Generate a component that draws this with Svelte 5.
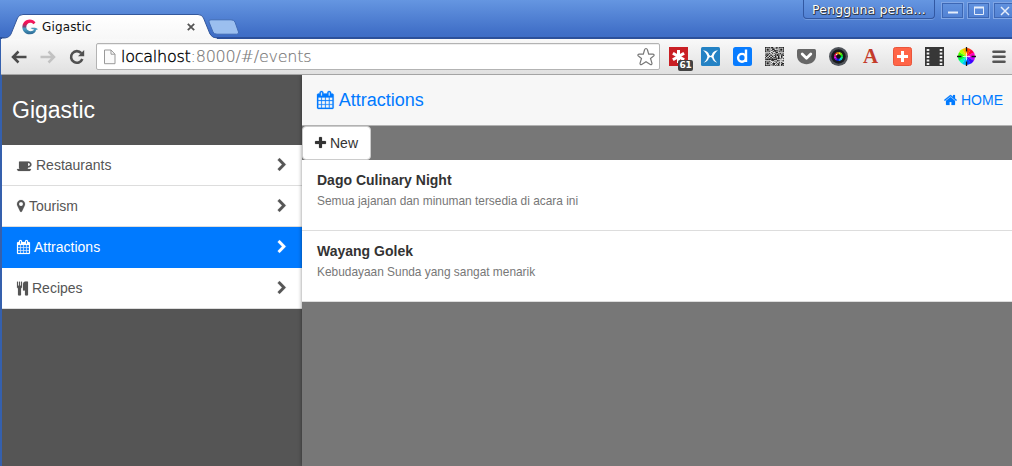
<script>
  const icons = {
    coffee: { x: 0, w: 1920, d: 'M1664 832q0-80-56-136t-136-56h-64v384h64q80 0 136-56t56-136zm-1664 576h1792q0 106-75 181t-181 75h-1280q-106 0-181-75t-75-181zm1856-576q0 159-112.500 271.500t-271.500 112.500h-64v32q0 92-66 158t-158 66h-704q-92 0-158-66t-66-158v-736q0-26 19-45t45-19h1152q159 0 271.500 112.500t112.500 271.500z' },
    marker: { x: 384, w: 1024, d: 'M1152 640q0-106-75-181t-181-75-181 75-75 181 75 181 181 75 181-75 75-181zm256 0q0 109-33 179l-364 774q-16 33-47.500 52t-67.500 19-67.500-19-46.500-52l-365-774q-33-70-33-179 0-212 150-362t362-150 362 150 150 362z' },
    calendar: { x: 64, w: 1664, d: 'M192 1664h288v-288h-288v288zm352 0h320v-288h-320v288zm-352-352h288v-320h-288v320zm352 0h320v-320h-320v320zm-352-384h288v-288h-288v288zm736 736h320v-288h-320v288zm-384-736h320v-288h-320v288zm768 736h288v-288h-288v288zm-384-352h320v-320h-320v320zm-352-864v-288q0-13-9.500-22.500t-22.500-9.500h-64q-13 0-22.500 9.500t-9.500 22.500v288q0 13 9.500 22.500t22.500 9.500h64q13 0 22.500-9.500t9.500-22.500zm736 864h288v-320h-288v320zm-384-384h320v-288h-320v288zm384 0h288v-288h-288v288zm32-480v-288q0-13-9.500-22.500t-22.500-9.500h-64q-13 0-22.500 9.500t-9.500 22.500v288q0 13 9.500 22.500t22.500 9.500h64q13 0 22.500-9.500t9.500-22.500zm384-64v1280q0 52-38 90t-90 38h-1408q-52 0-90-38t-38-90v-1280q0-52 38-90t90-38h128v-96q0-66 47-113t113-47h64q66 0 113 47t47 113v96h384v-96q0-66 47-113t113-47h64q66 0 113 47t47 113v96h128q52 0 90 38t38 90z' },
    cutlery: { x: 192, w: 1408, d: 'M832 128v640q0 61-35.500 111t-92.500 70v779q0 52-38 90t-90 38h-128q-52 0-90-38t-38-90v-779q-57-20-92.500-70t-35.500-111v-640q0-26 19-45t45-19 45 19 19 45v416q0 26 19 45t45 19 45-19 19-45v-416q0-26 19-45t45-19 45 19 19 45v416q0 26 19 45t45 19 45-19 19-45v-416q0-26 19-45t45-19 45 19 19 45zm768 0v1600q0 52-38 90t-90 38h-128q-52 0-90-38t-38-90v-512h-224q-13 0-22.500-9.500t-9.500-22.500v-800q0-132 94-226t226-94h256q26 0 45 19t19 45z' },
    chevron: { x: 256, w: 1280, d: 'M1363 877l-742 742q-19 19-45 19t-45-19l-166-166q-19-19-19-45t19-45l531-531-531-531q-19-19-19-45t19-45l166-166q19-19 45-19t45 19l742 742q19 19 19 45t-19 45z' },
    plus: { x: 192, w: 1408, d: 'M1600 736v192q0 40-28 68t-68 28h-416v416q0 40-28 68t-68 28h-192q-40 0-68-28t-28-68v-416h-416q-40 0-68-28t-28-68v-192q0-40 28-68t68-28h416v-416q0-40 28-68t68-28h192q40 0 68 28t28 68v416h416q40 0 68 28t28 68z' },
    home: { x: 64, w: 1664, d: 'M1472 992v480q0 26-19 45t-45 19h-384v-384h-256v384h-384q-26 0-45-19t-19-45v-480q0-1 .5-3t.5-3l575-474 575 474q1 2 1 6zm223-69l-62 74q-8 9-21 11h-3q-13 0-21-7l-692-577-692 577q-12 8-24 7-13-2-21-11l-62-74q-8-10-7-23.500t11-21.500l719-599q32-26 76-26t76 26l244 204v-195q0-14 9-23t23-9h192q14 0 23 9t9 23v408l219 182q10 8 11 21.500t-7 23.500z' }
  };

  const menu = [
    { icon: 'coffee', label: 'Restaurants' },
    { icon: 'marker', label: 'Tourism' },
    { icon: 'calendar', label: 'Attractions', active: true },
    { icon: 'cutlery', label: 'Recipes' }
  ];

  const events = [
    { title: 'Dago Culinary Night', text: 'Semua jajanan dan minuman tersedia di acara ini' },
    { title: 'Wayang Golek', text: 'Kebudayaan Sunda yang sangat menarik' }
  ];

  // 25x25 module grid for the QR extension icon
  const finder = (x, y) => {
    if (x > 7 || y > 7 || x < -1 || y < -1) return null;
    if (x === 7 || y === 7 || x === -1 || y === -1) return false;
    return x === 0 || y === 0 || x === 6 || y === 6 || (x > 1 && x < 5 && y > 1 && y < 5);
  };
  let qr = '';
  for (let y = 0; y < 25; y++)
    for (let x = 0; x < 25; x++) {
      const f = finder(x, y) ?? finder(x - 18, y) ?? finder(x, y - 18);
      const on = f ?? ((x * x * 7 + y * 13 + x * y * 3 + (x ^ (y * 5))) % 7 < 4);
      if (on) qr += `M${x} ${y}h1v1h-1z`;
    }

  const wheel = Array.from({ length: 12 }, (_, i) => {
    const a = (i * 30 - 90) * Math.PI / 180, b = (i * 30 - 59) * Math.PI / 180;
    return {
      d: `M0 0L${8.5 * Math.cos(a)} ${8.5 * Math.sin(a)}A8.5 8.5 0 0 1 ${8.5 * Math.cos(b)} ${8.5 * Math.sin(b)}Z`,
      c: `hsl(${(375 - i * 30) % 360} 100% 50%)`,
      k: `hsl(${(i * 30 + 60) % 360} 90% 50%)`
    };
  });
</script>

{#snippet fa(name, size)}
  {@const i = icons[name]}
  <svg class="fa" width={size * i.w / 1792} height={size} viewBox="{i.x} 0 {i.w} 1792"><path d={i.d} /></svg>
{/snippet}

<div class="window">
  <header class="titlebar">
    <div class="tab">
      <svg class="tabshape" width="216" height="25" viewBox="0 0 216 25">
        <defs><linearGradient id="tg" x2="0" y2="1"><stop offset="0" stop-color="#fff" /><stop offset="1" stop-color="#f7f7f7" /></linearGradient></defs>
        <path d="M0 25V24Q7 24.500 9 20L15.500 4Q17 .5 21 .5H196Q200 .5 201.500 4L208 20Q210 24 215 24V25Z" fill="url(#tg)" />
        <path d="M0 24Q7 24.500 9 20L15.500 4Q17 .5 21 .5H196Q200 .5 201.500 4L208 20Q210 24 215 24" fill="none" stroke="#34589c" stroke-width="1" />
      </svg>
      <svg class="favicon" width="16" height="16" viewBox="0 0 16 16">
        <defs><linearGradient id="fg" x2="0" y2="1"><stop offset="0" stop-color="#ff1763" /><stop offset=".3" stop-color="#e51454" /><stop offset=".48" stop-color="#754a7c" /><stop offset=".62" stop-color="#4aa0c4" /><stop offset="1" stop-color="#2d6692" /></linearGradient></defs>
        <path d="M13.500 3.500C11-.6 4.500-.5 1.600 3.700-1.500 8.300 1.200 15.500 8 15.300c3.600 0 5.700-2 6-4.300l2-.7c-2.200-2-4.500-1.800-7.500-1.200 1 .8 2 1.200 3.600 1.500C10.500 13 5.200 12.700 4.400 9 3.600 5 8 1.700 11.500 5.300Z" fill="url(#fg)" />
      </svg>
      <span class="tabtitle">Gigastic</span>
      <svg class="close" width="8" height="8" viewBox="0 0 8 8"><path d="M.8.8l6.400 6.400M7.200.8L.8 7.200" stroke="#555" stroke-width="1.800" /></svg>
    </div>
    <svg class="newtab" width="32" height="16" viewBox="0 0 32 16"><path d="M3 .8H23Q26 .8 27 3L30.500 13Q31.300 15.200 28.500 15.200H9Q6 15.200 5 13L1 3Q.3.8 3 .8Z" fill="#9bbfef" stroke="#416bb5" /></svg>
    <div class="user">Pengguna perta...</div>
    <div class="wbtn"><svg width="12" height="12" viewBox="0 0 12 12"><path d="M1 7.500h10" stroke="#e5edfa" stroke-width="2" /></svg></div>
    <div class="wbtn"><svg width="12" height="12" viewBox="0 0 12 12"><path d="M1.500 2.500h9v7h-9z" fill="none" stroke="#e5edfa" /><path d="M1 2.500h10" stroke="#e5edfa" stroke-width="2" /></svg></div>
    <div class="wbtn last"><svg width="12" height="12" viewBox="0 0 12 12"><path d="M2 2l8 8M10 2l-8 8" stroke="#e5edfa" stroke-width="1.500" /></svg></div>
  </header>

  <div class="toolbar">
    <svg class="back" width="16" height="14" viewBox="0 0 16 14"><path d="M15.500 7H2M7.500 1.500L2 7l5.500 5.500" fill="none" stroke="#4b4b4b" stroke-width="2.500" /></svg>
    <svg class="forward" width="16" height="14" viewBox="0 0 16 14"><path d="M.5 7H14M8.500 1.500L14 7l-5.500 5.500" fill="none" stroke="#c2c2c2" stroke-width="2.500" /></svg>
    <svg class="reload" width="16" height="16" viewBox="0 0 16 16"><path d="M12.300 4.200A5.800 5.800 0 1 0 13.300 10" fill="none" stroke="#505050" stroke-width="2.600" /><path d="M15.200 1v6.200H9z" fill="#505050" /></svg>
    <div class="omnibox">
      <svg width="13" height="16" viewBox="0 0 13 16"><path d="M1.500 1h6.500l4 4.200V14.700H1.500zM8 1v4.200h4" fill="#fafafa" stroke="#999" /></svg>
      <span class="url"><b>localhost</b>:8000/#/events</span>
      <svg class="star" width="20" height="20" viewBox="0 0 20 20"><path d="M10 1.500Q11 1.500 11.500 3L12.700 7.200H16.800Q18.500 7.400 18 8.600L14.500 11.500 16 16.300Q16 18.200 14.300 17.500L10 14.700 5.700 17.500Q4 18.200 4 16.300L5.500 11.500 2 8.600Q1.500 7.400 3.200 7.200H7.300L8.500 3Q9 1.500 10 1.500Z" fill="#fff" stroke="#777" stroke-width="1.200" /></svg>
    </div>
    <div class="extensions">
      <div class="ext">
        <svg width="19" height="19" viewBox="0 0 19 19"><rect width="19" height="19" fill="#c91f24" /><path d="M9.500 3v13M3.900 6.200l11.200 6.600M15.100 6.200L3.900 12.800" stroke="#fff" stroke-width="3" /></svg>
        <span class="badge">61</span>
      </div>
      <svg width="19" height="19" viewBox="0 0 19 19"><rect width="19" height="19" rx="1.500" fill="#2482c4" /><path d="M2 3.200C5.500 3.500 7.500 5 8.200 8L9.500 9 10.800 8C11.500 5 13.500 3.500 17 3.200 14.500 5 13.300 7 12.600 9.500 13 12 14.300 14 16.500 15.800 13.500 15 11.700 13.400 11 10.700L9.500 9.900 8 10.700C7.300 13.400 5.500 15 2.500 15.800 4.700 14 6 12 6.400 9.500 5.700 7 4.500 5 2 3.200Z" fill="#fff" /></svg>
      <svg width="19" height="19" viewBox="0 0 19 19"><rect width="19" height="19" rx="2.500" fill="#087cff" /><circle cx="9" cy="10.800" r="3.900" fill="none" stroke="#fff" stroke-width="2.400" /><path d="M13 2.500v12.500" stroke="#fff" stroke-width="2.400" /></svg>
      <svg width="19" height="19" viewBox="0 0 25 25"><path fill="#eee" d="M0 0h25v25H0z" /><path d={qr} fill="#1c1c1c" /></svg>
      <svg width="19" height="19" viewBox="0 0 19 19"><path d="M1.500 2h16Q19 2 19 3.500V8.500C19 20 0 20 0 8.500V3.500Q0 2 1.500 2Z" fill="#676767" /><path d="M5.200 7l4.300 4.200L13.800 7" fill="none" stroke="#fff" stroke-width="2.800" stroke-linecap="round" stroke-linejoin="round" /></svg>
      <svg width="19" height="19" viewBox="0 0 19 19"><circle cx="9.500" cy="9.500" r="9.500" fill="#50545a" /><circle cx="9.500" cy="9.500" r="7.200" fill="#17191d" /><g transform="translate(9.500 9.500) scale(.53)">{#each wheel as s}<path d={s.d} fill={s.k} />{/each}</g><circle cx="9.500" cy="9.500" r="2.300" fill="#111" /><circle cx="7.500" cy="7.500" r=".8" fill="#e8eef0" /></svg>
      <span class="serif">A</span>
      <svg width="19" height="19" viewBox="0 0 19 19"><rect x=".5" y=".5" width="18" height="18" rx="2" fill="#ff6547" stroke="#e9553b" /><path d="M9.500 4v11M4 9.500h11" stroke="#fff" stroke-width="3" /></svg>
      <svg width="19" height="19" viewBox="0 0 19 19"><rect width="19" height="19" fill="#373737" /><path d="M3 2v16M16 2v16" stroke="#eee" stroke-width="2.600" stroke-dasharray="2 1.500" /></svg>
      <svg width="19" height="19" viewBox="0 0 19 19"><g transform="translate(9.500 9.500)">{#each wheel as s}<path d={s.d} fill={s.c} />{/each}</g><path d="M9.500 0v4.500M9.500 14.500V19M0 9.500h4.500M14.500 9.500H19" stroke="#111" stroke-width="1.300" /><path d="M9.500 6v7M6 9.500h7" stroke="#fff" stroke-width=".7" /></svg>
      <svg class="menuicon" width="14" height="14" viewBox="0 0 14 14"><path d="M1.500 1.800h11M1.500 6.800h11M1.500 11.800h11" stroke="#555" stroke-width="2.600" stroke-linecap="round" /></svg>
    </div>
  </div>

  <div class="page">
    <aside>
      <h1>Gigastic</h1>
      <nav>
        {#each menu as item}
          <a class:active={item.active}>
            {@render fa(item.icon, 14)}<span>{item.label}</span>
            <i>{@render fa('chevron', 14)}</i>
          </a>
        {/each}
      </nav>
    </aside>
    <main>
      <div class="navbar">
        <h2>{@render fa('calendar', 18)}<span>Attractions</span></h2>
        <a class="home">{@render fa('home', 14)}<span>HOME</span></a>
      </div>
      <button>{@render fa('plus', 14)}<span>New</span></button>
      <ul>
        {#each events as event}
          <li><h3>{event.title}</h3><p>{event.text}</p></li>
        {/each}
      </ul>
    </main>
  </div>
</div>

<style>
  :global(body) { margin: 0; overflow: hidden; }
  * { box-sizing: border-box; }
  svg { display: block; flex: none; }
  .window { width: 1012px; height: 466px; display: flex; flex-direction: column; font-family: "Liberation Sans", Arial, sans-serif; overflow: hidden; background: #3560ad; }
  .titlebar { height: 39px; flex: none; display: flex; align-items: flex-start; background: linear-gradient(#6596e1, #4170c8 32px, #3e6dc6 37px, #2c509a 37px, #2c509a); }
  .tab { position: relative; width: 206px; height: 25px; margin: 14px 0 0 2px; padding-left: 20px; display: flex; align-items: center; flex: none; }
  .tabshape { position: absolute; left: 0; top: 0; }
  .favicon { position: relative; }
  .tabtitle { position: relative; margin-left: 4px; font: 12px "DejaVu Sans", sans-serif; letter-spacing: .15px; color: #111; }
  .close { position: relative; margin-left: auto; margin-right: 13px; }
  .newtab { margin: 19px 0 0 0; }
  .user { margin-left: auto; margin-right: 6px; width: 132px; height: 19px; border: 1px solid #3258a2; border-top: 0; border-radius: 0 0 4px 4px; box-shadow: 0 1px #729bdf; padding-left: 8px; font: 12.500px/19px "DejaVu Sans", sans-serif; letter-spacing: .15px; color: #fff; text-shadow: 1px 1px #303b4b, 0 1px #303b4b, 1px 0 #303b4b; white-space: nowrap; }
  .wbtn { width: 23px; height: 17px; margin: 2px 3px 0 0; border: 1px solid #80a6e5; outline: 1px solid #3d67b4; outline-offset: -2px; display: flex; align-items: center; justify-content: center; flex: none; }
  .wbtn.last { margin-right: -4px; }
  .toolbar { height: 36px; flex: none; margin-left: 1px; display: flex; align-items: center; background: linear-gradient(#f9f9f9, #e0e0e0); border-bottom: 1px solid #a4a4a4; padding-left: 10px; }
  .forward { margin-left: 13px; }
  .reload { margin-left: 13px; }
  .omnibox { margin-left: 11px; width: 564px; height: 27px; display: flex; align-items: center; background: #fff; border: 1px solid #b3b3b3; border-radius: 2px; padding: 0 3px 0 6px; box-shadow: inset 0 1px #eee; }
  .url { margin-left: 5px; font: 200 16px "DejaVu Sans Light", "DejaVu Sans", sans-serif; letter-spacing: -.25px; color: #777; -webkit-text-stroke: .15px; }
  .url b { font-weight: 200; color: #000; -webkit-text-stroke: .35px; }
  .star { margin-left: auto; }
  .extensions { margin-left: 9px; display: flex; align-items: center; gap: 13px; }
  .ext { position: relative; }
  .badge { position: absolute; left: 9px; top: 13px; width: 15px; height: 11px; border-radius: 2px; background: #424242; color: #fff; font: bold 9px/11px "DejaVu Sans", sans-serif; text-align: center; letter-spacing: -.3px; }
  .serif { width: 19px; text-align: center; font: bold 19px/19px "Liberation Serif", serif; font-size: 21px; color: #c43b2a; }
  .menuicon { margin-left: 3px; }
  .page { flex: 1; margin-left: 2px; display: flex; min-height: 0; }
  aside { width: 300px; background: #555; flex: none; }
  h1, h2, h3, p, ul { margin: 0; padding: 0; font-weight: normal; }
  h1 { height: 70px; padding-left: 10px; font-size: 23px; line-height: 70px; color: #fff; }
  nav a { height: 41px; display: flex; align-items: center; padding: 0 15px; background: #fff; border-bottom: 1px solid #ddd; color: #555; font-size: 14px; }
  nav a.active { background: #007aff; border-color: #007aff; color: #fff; }
  .fa { fill: currentColor; stroke: currentColor; stroke-width: 24; overflow: visible; }
  nav span, .home span, button span { margin-left: 4px; }
  nav i { margin-left: auto; }
  main { flex: 1; background: #777; box-shadow: 0 0 4px rgba(0, 0, 0, .45); position: relative; clip-path: inset(0 0 0 -6px); }
  .navbar { height: 51px; display: flex; align-items: center; justify-content: space-between; padding: 0 9px 0 15px; background: #f7f7f7; border-bottom: 1px solid #b2b2b2; color: #007aff; }
  h2, .home { display: flex; align-items: center; font-size: 18px; }
  h2 span { margin-left: 5px; }
  .home { font-size: 14px; }
  button { display: flex; align-items: center; width: 69px; height: 34px; padding: 0 12px; border: 1px solid #ccc; border-radius: 4px; background: #fff; color: #333; font: 14px "Liberation Sans", Arial, sans-serif; }
  ul { list-style: none; }
  li { height: 71px; padding: 10px 15px; background: #fff; border-bottom: 1px solid #ddd; }
  h3 { font-size: 14px; line-height: 20px; font-weight: bold; color: #333; }
  p { font-size: 11.900px; line-height: 22px; color: #777; }
</style>
